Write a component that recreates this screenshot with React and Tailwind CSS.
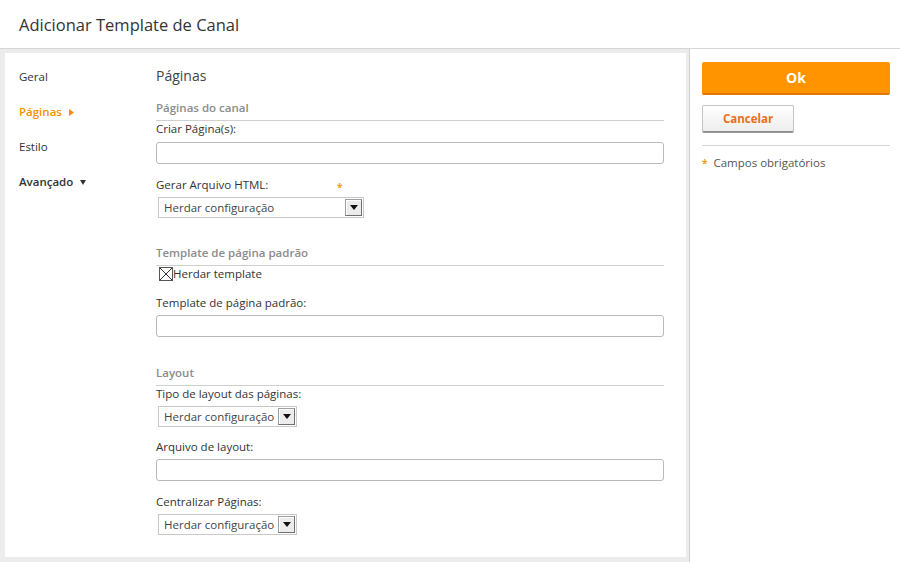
import React from 'react';

const font = { fontFamily: '"Open Sans", "Noto Sans", sans-serif' };

const SectionHeader = ({ children, className = '' }) => (
  <div className={`h-[21px] leading-[16px] border-b border-[#d0d0d0] text-[11.5px] font-semibold text-[#8c8c8c] ${className}`}>
    {children}
  </div>
);

const Label = ({ children, className = '' }) => (
  <div className={`leading-[16px] text-[11.5px] text-[#333] ${className}`}>{children}</div>
);

const TextInput = ({ className = '' }) => (
  <div className={`h-[22px] w-[508px] rounded-[3px] border border-[#b9b9b9] bg-white ${className}`} />
);

const Select = ({ width, className = '' }) => (
  <div
    className={`ml-[2px] flex h-[21px] items-center justify-between border border-[#c8c8c8] bg-white pl-[5px] pr-[1px] ${width} ${className}`}
  >
    <span className="whitespace-nowrap text-[11.5px] leading-[16px] text-[#444]">Herdar configuração</span>
    <span className="flex h-[17px] w-[17px] shrink-0 items-center justify-center border border-[#a0a0a0] border-b-[#6f6f6f] border-r-[#6f6f6f] bg-[#ececec] shadow-[inset_1px_1px_0_#fff]">
      <svg width="8" height="5" viewBox="0 0 8 5">
        <path d="M0 0h8L4 5z" fill="#111" />
      </svg>
    </span>
  </div>
);

const NavItem = ({ children, className = '' }) => (
  <div className={`flex items-center leading-[16px] text-[11.5px] ${className}`}>{children}</div>
);

export default function App() {
  return (
    <div className="flex h-[562px] w-[900px] flex-col overflow-hidden bg-white" style={font}>
      {/* Header */}
      <div className="h-[49px] shrink-0 border-b border-[#d6d6d6] pl-[19px] pt-[13px]">
        <h1 className="text-[16.5px] leading-[24px] text-[#333]">Adicionar Template de Canal</h1>
      </div>

      <div className="flex min-h-0 flex-1">
        {/* Main area */}
        <div className="w-[689px] shrink-0 bg-[#ececec] pb-[5px] pl-[5px] pr-[3px] pt-[4px]">
          <div className="flex h-full bg-white">
            {/* Side nav */}
            <div className="flex w-[151px] shrink-0 flex-col gap-[19px] pl-[14px] pt-[16px]">
              <NavItem className="text-[#333]">Geral</NavItem>
              <NavItem className="font-semibold text-[#f39200]">
                Páginas
                <svg className="ml-[7px]" width="5" height="7" viewBox="0 0 5 7">
                  <path d="M0 0l5 3.5L0 7z" fill="#f39200" />
                </svg>
              </NavItem>
              <NavItem className="text-[#333]">Estilo</NavItem>
              <NavItem className="font-semibold text-[#333]">
                Avançado
                <svg className="ml-[7px]" width="6" height="5" viewBox="0 0 6 5">
                  <path d="M0 0h6L3 5z" fill="#333" />
                </svg>
              </NavItem>
            </div>

            {/* Form */}
            <div className="flex w-[508px] flex-col pt-[13px]">
              <h2 className="text-[14px] leading-[20px] text-[#444]">Páginas</h2>

              <SectionHeader className="mt-[14px]">Páginas do canal</SectionHeader>
              <Label className="leading-[15px]">Criar Página(s):</Label>
              <TextInput className="mt-[5px]" />

              <Label className="mt-[13px] flex items-center">
                <span className="w-[181px]">Gerar Arquivo HTML:</span>
                <span className="mt-[3px] text-[10px] font-bold leading-[10px] text-[#f0a020]">*</span>
              </Label>
              <Select width="w-[206px]" className="mt-[4px]" />

              <SectionHeader className="mt-[27px]">Template de página padrão</SectionHeader>
              <div className="flex h-[16px] items-center">
                <span className="ml-[3px] flex h-[14px] w-[14px] items-center justify-center border border-[#555] bg-white">
                  <svg width="12" height="12" viewBox="0 0 12 12">
                    <path d="M0 0L12 12M12 0L0 12" stroke="#333" strokeWidth="1" />
                  </svg>
                </span>
                <span className="text-[11.5px] leading-[16px] text-[#333]">Herdar template</span>
              </div>

              <Label className="mt-[13px]">Template de página padrão:</Label>
              <TextInput className="mt-[4px]" />

              <SectionHeader className="mt-[28px]">Layout</SectionHeader>
              <Label>Tipo de layout das páginas:</Label>
              <Select width="w-[139px]" className="mt-[4px]" />

              <Label className="mt-[12px]">Arquivo de layout:</Label>
              <TextInput className="mt-[4px]" />

              <Label className="mt-[13px]">Centralizar Páginas:</Label>
              <Select width="w-[139px]" className="mt-[4px]" />
            </div>
          </div>
        </div>

        {/* Right panel */}
        <div className="flex flex-1 flex-col border-l border-[#d0d0d0] px-[12px] pt-[13px]">
          <button className="h-[33px] w-[188px] rounded-[2px] border-b-2 border-[#e27600] bg-[#ff9400] text-[14px] font-bold text-white">
            Ok
          </button>
          <button className="mt-[10px] h-[27px] w-[92px] rounded-[2px] border border-[#c4c4c4] border-b-[#8a8a8a] bg-gradient-to-b from-white to-[#eeeeee] text-[11.5px] font-bold text-[#ec6d1a] shadow-[0_1px_0_#999]">
            Cancelar
          </button>
          <div className="mt-[13px] w-[188px] border-t border-[#d6d6d6]" />
          <div className="mt-[9px] flex items-center text-[11.5px] leading-[16px] text-[#555]">
            <span className="mr-[6px] text-[10px] font-bold text-[#f0a020]">*</span>
            Campos obrigatórios
          </div>
        </div>
      </div>
    </div>
  );
}
